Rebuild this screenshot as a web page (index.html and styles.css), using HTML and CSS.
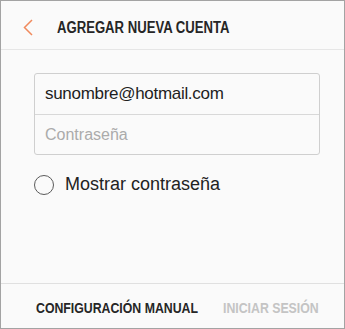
FILE: index.html
```html
<!DOCTYPE html>
<html lang="es">
<head>
<meta charset="utf-8">
<link rel="stylesheet" href="styles.css">
</head>
<body>
<div class="screen">
  <header class="topbar">
    <svg class="back" width="10" height="17" viewBox="0 0 10 17"><path d="M9 1 L1.5 8.5 L9 16" fill="none" stroke="#f08a5d" stroke-width="1.5"/></svg>
    <h1 class="title">AGREGAR NUEVA CUENTA</h1>
  </header>
  <main class="content">
    <div class="card">
      <div class="field value">sunombre@hotmail.com</div>
      <div class="field placeholder">Contraseña</div>
    </div>
    <label class="check">
      <span class="radio"></span>
      <span class="check-label">Mostrar contraseña</span>
    </label>
  </main>
  <footer class="actions">
    <span class="action primary">CONFIGURACIÓN MANUAL</span>
    <span class="action disabled">INICIAR SESIÓN</span>
  </footer>
</div>
</body>
</html>
```
FILE: styles.css
```css
* { box-sizing: border-box; }
html, body { margin: 0; padding: 0; }
body { font-family: "Liberation Sans", Arial, sans-serif; }
.screen {
  width: 345px;
  height: 329px;
  border: 1px solid #a3a3a3;
  background: #fafafa;
  display: flex;
  flex-direction: column;
}
.topbar {
  height: 49px;
  padding: 5px 0 0 22px;
  border-bottom: 1px solid #e6e6e6;
  display: flex;
  align-items: center;
}
.back { display: block; flex: none; }
.title {
  margin: 0 0 0 24px;
  font-size: 16px;
  font-weight: 700;
  color: #262626;
  white-space: nowrap;
  transform: scaleX(0.82);
  transform-origin: left center;
}
.content {
  flex: 1;
  padding: 23px 24px 0 33px;
}
.card {
  border: 1px solid #cfcfcf;
  border-radius: 3px;
  background: #fafafa;
}
.field {
  height: 40px;
  padding-left: 10px;
  display: flex;
  align-items: center;
}
.field + .field { border-top: 1px solid #d8d8d8; }
.value { color: #1e1e1e; font-size: 17px; letter-spacing: -0.3px; }
.placeholder { color: #ababab; font-size: 16px; }
.check {
  display: flex;
  align-items: center;
  margin-top: 19px;
}
.radio {
  width: 20px;
  height: 20px;
  border: 1.5px solid #5a5a5a;
  border-radius: 50%;
  flex: none;
}
.check-label {
  margin-left: 11px;
  font-size: 18px;
  color: #222;
}
.actions {
  height: 45px;
  border-top: 1px solid #e0e0e0;
  display: flex;
  align-items: center;
  justify-content: space-between;
  padding: 2px 25px 0 35px;
}
.action {
  display: inline-block;
  flex: none;
  font-size: 15px;
  font-weight: 700;
  white-space: nowrap;
  transform: scaleX(0.82);
}
.primary { color: #262626; transform-origin: left center; margin-right: -36px; }
.disabled { color: #c4c4c4; transform-origin: right center; margin-left: -21px; }
```
